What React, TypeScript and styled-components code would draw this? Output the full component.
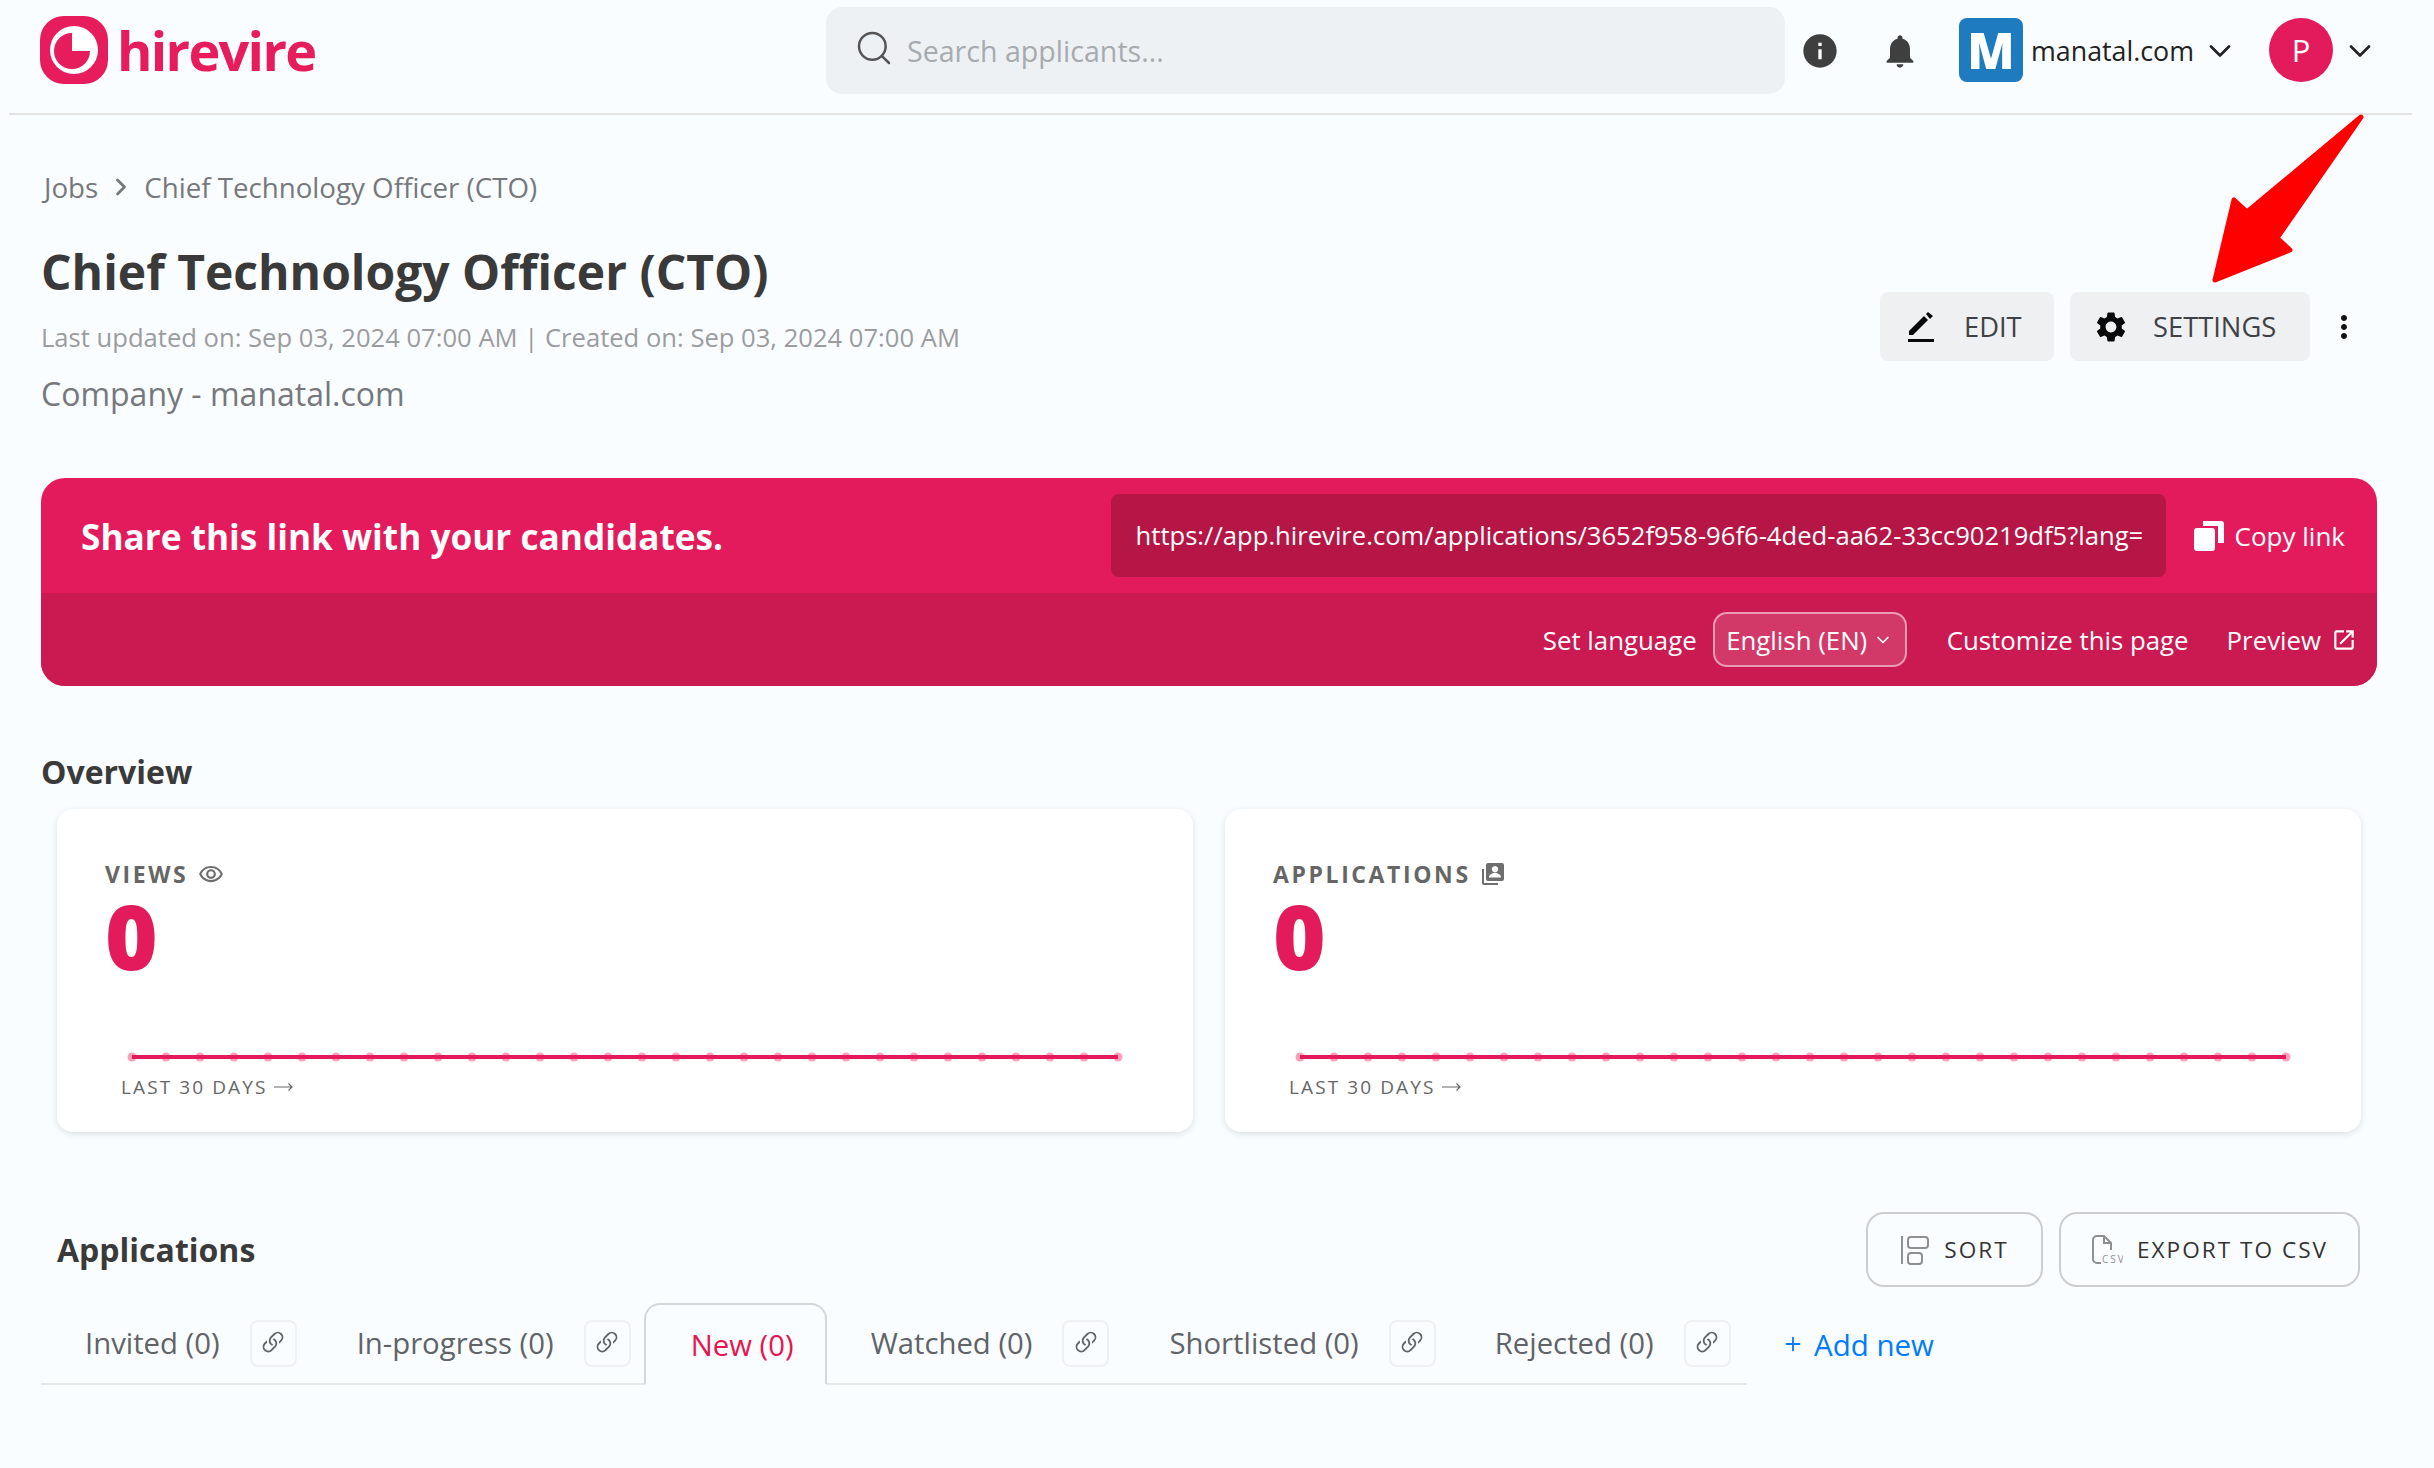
import styled, { createGlobalStyle } from 'styled-components'
import { Search, ChevronDown, ChevronRight, Plus } from 'lucide-react'
import {
  MdInfo,
  MdNotifications,
  MdSettings,
  MdMoreVert,
  MdOpenInNew,
  MdOutlineRemoveRedEye,
} from 'react-icons/md'
import { BsLink45Deg } from 'react-icons/bs'

const GlobalStyle = createGlobalStyle`
  html, body {
    margin: 0;
    padding: 0;
    background: #fafdff;
    font-family: "Open Sans", "Noto Sans", sans-serif;
  }
  * {
    box-sizing: border-box;
  }
`

const Page = styled.div`
  position: relative;
  width: 2434px;
  height: 1468px;
  overflow: hidden;
  background: #fafdff;
`

const TopBar = styled.header`
  display: flex;
  align-items: flex-start;
  height: 115px;
  margin: 0 22px 0 9px;
  padding: 7px 0 0 31px;
  border-bottom: 2px solid #e2e2e2;
`

const Brand = styled.div`
  display: flex;
  align-items: center;
  gap: 9px;
  width: 786px;
  height: 85px;
`

const BrandName = styled.span`
  color: #e71c5c;
  font-size: 54px;
  font-weight: 700;
  letter-spacing: -1.7px;
  line-height: 1;
`

const SearchBox = styled.div`
  display: flex;
  align-items: center;
  gap: 13px;
  width: 959px;
  height: 87px;
  padding: 0 28px;
  border-radius: 16px;
  background: #eef1f3;
  color: #a6abb0;
  font-size: 28.6px;
  svg {
    color: #555;
    margin-top: -6px;
  }
`

const BarIcon = styled.div<{ $left: number }>`
  display: flex;
  align-items: center;
  height: 87px;
  margin-left: ${(p) => p.$left}px;
  color: #3f3f3f;
`

const CompanyLogo = styled.div`
  display: flex;
  align-items: center;
  justify-content: center;
  width: 64px;
  height: 64px;
  margin: 11px 0 0 39px;
  border-radius: 8px;
  background: #1e7bc0;
  color: #fff;
  font-size: 49px;
  font-weight: 800;
  line-height: 1;
`

const CompanyName = styled.div`
  display: flex;
  align-items: center;
  height: 87px;
  margin-left: 8px;
  color: #222;
  font-size: 26.8px;
`

const Avatar = styled.div`
  display: flex;
  align-items: center;
  justify-content: center;
  width: 64px;
  height: 64px;
  margin: 11px 0 0 31px;
  border-radius: 50%;
  background: #e31b5c;
  color: #fff;
  font-size: 31px;
`

const Main = styled.main`
  padding: 0 57px 0 41px;
`

const Breadcrumb = styled.nav`
  display: flex;
  align-items: center;
  gap: 9px;
  height: 40px;
  margin-top: 52px;
  padding-left: 3px;
  color: #75787c;
  font-size: 27.7px;
`

const HeadingRow = styled.div`
  display: flex;
  justify-content: space-between;
  align-items: flex-start;
`

const Title = styled.h1`
  margin: 33px 0 0;
  color: #3a3a3a;
  font-size: 48px;
  font-weight: 700;
  line-height: 64px;
`

const Updated = styled.div`
  margin-top: 16px;
  color: #9a9c9f;
  font-size: 25.6px;
  line-height: 36px;
`

const CompanyLine = styled.div`
  margin-top: 16px;
  color: #75787c;
  font-size: 32px;
  line-height: 44px;
`

const Actions = styled.div`
  display: flex;
  align-items: center;
  gap: 16px;
  margin: 85px 15px 0 0;
  color: #111;
`

const ActionButton = styled.div<{ $width: number; $pad: number; $gap: number }>`
  display: flex;
  align-items: center;
  gap: ${(p) => p.$gap}px;
  width: ${(p) => p.$width}px;
  height: 69px;
  padding-left: ${(p) => p.$pad}px;
  border-radius: 8px;
  background: #eef0f2;
  color: #3f4145;
  font-size: 27.3px;
  svg {
    color: #0a0a0a;
    flex: none;
  }
`

const Banner = styled.section`
  width: 2336px;
  height: 208px;
  margin-top: 62px;
  border-radius: 24px;
  overflow: hidden;
  background: #e31b5c;
  color: #fff;
`

const BannerTop = styled.div`
  display: flex;
  align-items: center;
  height: 115px;
  padding: 0 32px 0 40px;
`

const BannerTitle = styled.div`
  width: 1033px;
  font-size: 35.2px;
  font-weight: 700;
`

const UrlBox = styled.div`
  display: flex;
  align-items: center;
  flex: none;
  width: 1055px;
  height: 83px;
  padding-left: 25px;
  border-radius: 8px;
  background: #b51645;
  font-size: 25.6px;
  white-space: nowrap;
`

const CopyLink = styled.div`
  display: flex;
  align-items: center;
  gap: 11px;
  margin-left: 28px;
  font-size: 26px;
  white-space: nowrap;
`

const BannerBottom = styled.div`
  display: flex;
  align-items: center;
  justify-content: flex-end;
  height: 93px;
  padding-right: 20px;
  background: #cb1951;
  font-size: 25.8px;
  white-space: nowrap;
`

const LanguagePill = styled.div`
  display: flex;
  align-items: center;
  justify-content: center;
  gap: 6px;
  width: 194px;
  height: 55px;
  margin: 0 40px 0 16px;
  border: 2px solid rgba(255, 255, 255, 0.5);
  border-radius: 14px;
  background: rgba(255, 255, 255, 0.14);
`

const PreviewLink = styled.div`
  display: flex;
  align-items: center;
  gap: 10px;
  margin-left: 38px;
`

const SectionTitle = styled.h2`
  margin: 64px 0 0;
  color: #3a3a3a;
  font-size: 32px;
  font-weight: 700;
  line-height: 44px;
`

const Cards = styled.div`
  display: flex;
  gap: 32px;
  margin-top: 15px;
  padding-left: 16px;
`

const Card = styled.article`
  width: 1136px;
  height: 323px;
  padding: 48px 0 0 48px;
  border-radius: 16px;
  background: #fff;
  box-shadow: 0 2px 6px rgba(60, 70, 90, 0.16);
`

const CardLabel = styled.div`
  display: flex;
  align-items: center;
  gap: 10px;
  height: 34px;
  color: #666;
  font-size: 23px;
  font-weight: 700;
  letter-spacing: 2.6px;
  svg {
    flex: none;
  }
`

const CardValue = styled.div`
  height: 92px;
  margin-top: -2px;
  color: #e31b5c;
  font-size: 90px;
  font-weight: 800;
  line-height: 92px;
`

const Spark = styled.svg`
  display: block;
  margin: 70px 0 0 22px;
`

const CardFoot = styled.div`
  display: flex;
  align-items: center;
  gap: 7px;
  margin: 10px 0 0 16px;
  color: #666;
  font-size: 19px;
  letter-spacing: 2.1px;
  line-height: 28px;
`

const ApplicationsHead = styled.div`
  display: flex;
  align-items: center;
  justify-content: space-between;
  height: 75px;
  margin-top: 80px;
  padding: 0 17px 0 16px;
`

const ApplicationsTitle = styled.h2`
  margin: 0;
  color: #3a3a3a;
  font-size: 32px;
  font-weight: 700;
`

const HeadButtons = styled.div`
  display: flex;
  gap: 16px;
`

const OutlineButton = styled.div<{ $width: number }>`
  display: flex;
  align-items: center;
  justify-content: center;
  gap: 14px;
  width: ${(p) => p.$width}px;
  height: 75px;
  border: 2px solid #cbcdd0;
  border-radius: 18px;
  color: #333;
  font-size: 22.6px;
  letter-spacing: 2px;
`

const TabsRow = styled.div`
  display: flex;
  align-items: flex-start;
  margin-top: 16px;
`

const TabList = styled.div`
  display: flex;
  align-items: stretch;
  width: 1706px;
  height: 82px;
  border-bottom: 2px solid #e5e7ea;
`

const Tab = styled.div<{ $lead: number }>`
  display: flex;
  align-items: center;
  gap: 30px;
  margin-left: ${(p) => p.$lead}px;
  color: #606368;
  font-size: 29.3px;
  white-space: nowrap;
`

const ActiveTab = styled.div`
  display: flex;
  align-items: center;
  justify-content: center;
  width: 183px;
  height: 82px;
  margin-left: 13px;
  padding: 2px 0 0 14px;
  border: 2px solid #d3d6da;
  border-bottom: 2px solid #fafdff;
  border-radius: 16px 16px 0 0;
  color: #e7154f;
  font-size: 29.3px;
  white-space: nowrap;
`

const LinkChip = styled.div`
  display: flex;
  align-items: center;
  justify-content: center;
  width: 47px;
  height: 47px;
  border: 2px solid #eef0f2;
  border-radius: 8px;
  color: #606368;
`

const AddNew = styled.div`
  display: flex;
  align-items: center;
  gap: 10px;
  height: 82px;
  margin-left: 35px;
  color: #007bff;
  font-size: 29.5px;
  white-space: nowrap;
`

const RedArrow = styled.svg`
  position: absolute;
  top: 0;
  left: 0;
  pointer-events: none;
`

function LogoMark() {
  return (
    <svg width="68" height="68" viewBox="0 0 68 68">
      <rect width="68" height="68" rx="24" fill="#e71c5c" />
      <circle cx="34" cy="34" r="24" fill="#fff" />
      <path d="M32 17 A18 18 0 1 0 50 35 H32 Z" fill="#e71c5c" />
    </svg>
  )
}

function EditIcon() {
  return (
    <svg width="26" height="30" viewBox="0 0 26 30" fill="#0a0a0a">
      <path d="M1 19 L16 4 L20 8 L5 23 H1 Z" />
      <path d="M18 2 L20 0 L25 4 L22 7 Z" />
      <rect x="0" y="27" width="26" height="3" />
    </svg>
  )
}

function CopyIcon() {
  return (
    <svg width="30" height="30" viewBox="0 0 30 30" fill="#fff">
      <rect x="0" y="7" width="21" height="23" rx="3" />
      <path d="M9 0 H27 a3 3 0 0 1 3 3 V22 H24 V5 H9 Z" />
    </svg>
  )
}

function ApplicationsIcon() {
  return (
    <svg width="24" height="24" viewBox="0 0 24 24" fill="#6e6e6e">
      <path d="M1 7 H3 V21 H17 V23 H3 a2 2 0 0 1 -2 -2 Z" />
      <path
        fillRule="evenodd"
        d="M7 1 H21 a2 2 0 0 1 2 2 V17 a2 2 0 0 1 -2 2 H7 a2 2 0 0 1 -2 -2 V3 a2 2 0 0 1 2 -2 Z M14 4 a3.2 3.2 0 1 0 0.01 0 Z M8 15.5 H20 c0 -3 -3 -4.5 -6 -4.5 s-6 1.5 -6 4.5 Z"
      />
    </svg>
  )
}

function SortIcon() {
  return (
    <svg width="30" height="30" viewBox="0 0 30 30" fill="none" stroke="#8d8f92" strokeWidth="2">
      <path d="M2 1 V29" />
      <rect x="8" y="2" width="20" height="11" rx="3" />
      <rect x="8" y="18" width="14" height="11" rx="3" />
    </svg>
  )
}

function CsvIcon() {
  return (
    <svg width="32" height="30" viewBox="0 0 32 30" fill="none" stroke="#8d8f92" strokeWidth="2">
      <path d="M10 28 H6 a4 4 0 0 1 -4 -4 V5 a4 4 0 0 1 4 -4 H13 L20 8 V15" />
      <path d="M13 1 V8 H20" />
      <text x="11" y="28" fontSize="10" fill="#8d8f92" stroke="none" fontFamily="Open Sans">
        CSV
      </text>
    </svg>
  )
}

function LongArrow() {
  return (
    <svg width="19" height="10" viewBox="0 0 19 10" fill="none" stroke="#666" strokeWidth="1.2">
      <path d="M0 5 H18 M14.5 1.5 L18 5 L14.5 8.5" />
    </svg>
  )
}

function Sparkline() {
  const dots = Array.from({ length: 30 }, (_, i) => 5 + i * 34)
  return (
    <Spark width="1000" height="12" viewBox="0 0 1000 12">
      {dots.map((x) => (
        <circle key={x} cx={x} cy="6" r="4.5" fill="#ff9fba" />
      ))}
      <line x1="5" y1="6" x2="991" y2="6" stroke="#e31b5c" strokeWidth="4" />
    </Spark>
  )
}

const tabsBefore = [
  { name: 'Invited (0)', lead: 44 },
  { name: 'In-progress (0)', lead: 60 },
]

const tabsAfter = [
  { name: 'Watched (0)', lead: 44 },
  { name: 'Shortlisted (0)', lead: 60 },
  { name: 'Rejected (0)', lead: 59 },
]

function StatusTab({ name, lead }: { name: string; lead: number }) {
  return (
    <Tab $lead={lead}>
      {name}
      <LinkChip>
        <BsLink45Deg size={30} />
      </LinkChip>
    </Tab>
  )
}

function StatCard({ label, icon }: { label: string; icon: React.ReactNode }) {
  return (
    <Card>
      <CardLabel>
        {label}
        {icon}
      </CardLabel>
      <CardValue>0</CardValue>
      <Sparkline />
      <CardFoot>
        LAST 30 DAYS
        <LongArrow />
      </CardFoot>
    </Card>
  )
}

export default function App() {
  return (
    <Page>
      <GlobalStyle />
      <TopBar>
        <Brand>
          <LogoMark />
          <BrandName>hirevire</BrandName>
        </Brand>
        <SearchBox>
          <Search size={40} strokeWidth={1.5} />
          Search applicants...
        </SearchBox>
        <BarIcon $left={15}>
          <MdInfo size={40} />
        </BarIcon>
        <BarIcon $left={40}>
          <MdNotifications size={40} />
        </BarIcon>
        <CompanyLogo>M</CompanyLogo>
        <CompanyName>manatal.com</CompanyName>
        <BarIcon $left={8}>
          <ChevronDown size={36} strokeWidth={1.8} color="#222" />
        </BarIcon>
        <Avatar>P</Avatar>
        <BarIcon $left={9}>
          <ChevronDown size={36} strokeWidth={1.8} color="#222" />
        </BarIcon>
      </TopBar>

      <Main>
        <Breadcrumb>
          Jobs
          <ChevronRight size={28} strokeWidth={2.4} />
          Chief Technology Officer (CTO)
        </Breadcrumb>
        <HeadingRow>
          <div>
            <Title>Chief Technology Officer (CTO)</Title>
            <Updated>Last updated on: Sep 03, 2024 07:00 AM | Created on: Sep 03, 2024 07:00 AM</Updated>
            <CompanyLine>Company - manatal.com</CompanyLine>
          </div>
          <Actions>
            <ActionButton $width={174} $pad={28} $gap={30}>
              <EditIcon />
              EDIT
            </ActionButton>
            <ActionButton $width={240} $pad={23} $gap={24}>
              <MdSettings size={36} />
              SETTINGS
            </ActionButton>
            <MdMoreVert size={36} />
          </Actions>
        </HeadingRow>

        <Banner>
          <BannerTop>
            <BannerTitle>Share this link with your candidates.</BannerTitle>
            <UrlBox>https://app.hirevire.com/applications/3652f958-96f6-4ded-aa62-33cc90219df5?lang=</UrlBox>
            <CopyLink>
              <CopyIcon />
              Copy link
            </CopyLink>
          </BannerTop>
          <BannerBottom>
            Set language
            <LanguagePill>
              English (EN)
              <ChevronDown size={20} />
            </LanguagePill>
            Customize this page
            <PreviewLink>
              Preview
              <MdOpenInNew size={26} />
            </PreviewLink>
          </BannerBottom>
        </Banner>

        <SectionTitle>Overview</SectionTitle>
        <Cards>
          <StatCard label="VIEWS" icon={<MdOutlineRemoveRedEye size={26} color="#6e6e6e" />} />
          <StatCard label="APPLICATIONS" icon={<ApplicationsIcon />} />
        </Cards>

        <ApplicationsHead>
          <ApplicationsTitle>Applications</ApplicationsTitle>
          <HeadButtons>
            <OutlineButton $width={177}>
              <SortIcon />
              SORT
            </OutlineButton>
            <OutlineButton $width={301}>
              <CsvIcon />
              EXPORT TO CSV
            </OutlineButton>
          </HeadButtons>
        </ApplicationsHead>

        <TabsRow>
          <TabList>
            {tabsBefore.map((t) => (
              <StatusTab key={t.name} name={t.name} lead={t.lead} />
            ))}
            <ActiveTab>New (0)</ActiveTab>
            {tabsAfter.map((t) => (
              <StatusTab key={t.name} name={t.name} lead={t.lead} />
            ))}
          </TabList>
          <AddNew>
            <Plus size={22} />
            Add new
          </AddNew>
        </TabsRow>
      </Main>

      <RedArrow width="2434" height="1468" viewBox="0 0 2434 1468">
        <path
          d="M2361 117 L2247 212 L2234 200 L2215 280 L2290 250 L2277 238 Z"
          fill="#fe0000"
          stroke="#fe0000"
          strokeWidth="5"
          strokeLinejoin="round"
        />
      </RedArrow>
    </Page>
  )
}
